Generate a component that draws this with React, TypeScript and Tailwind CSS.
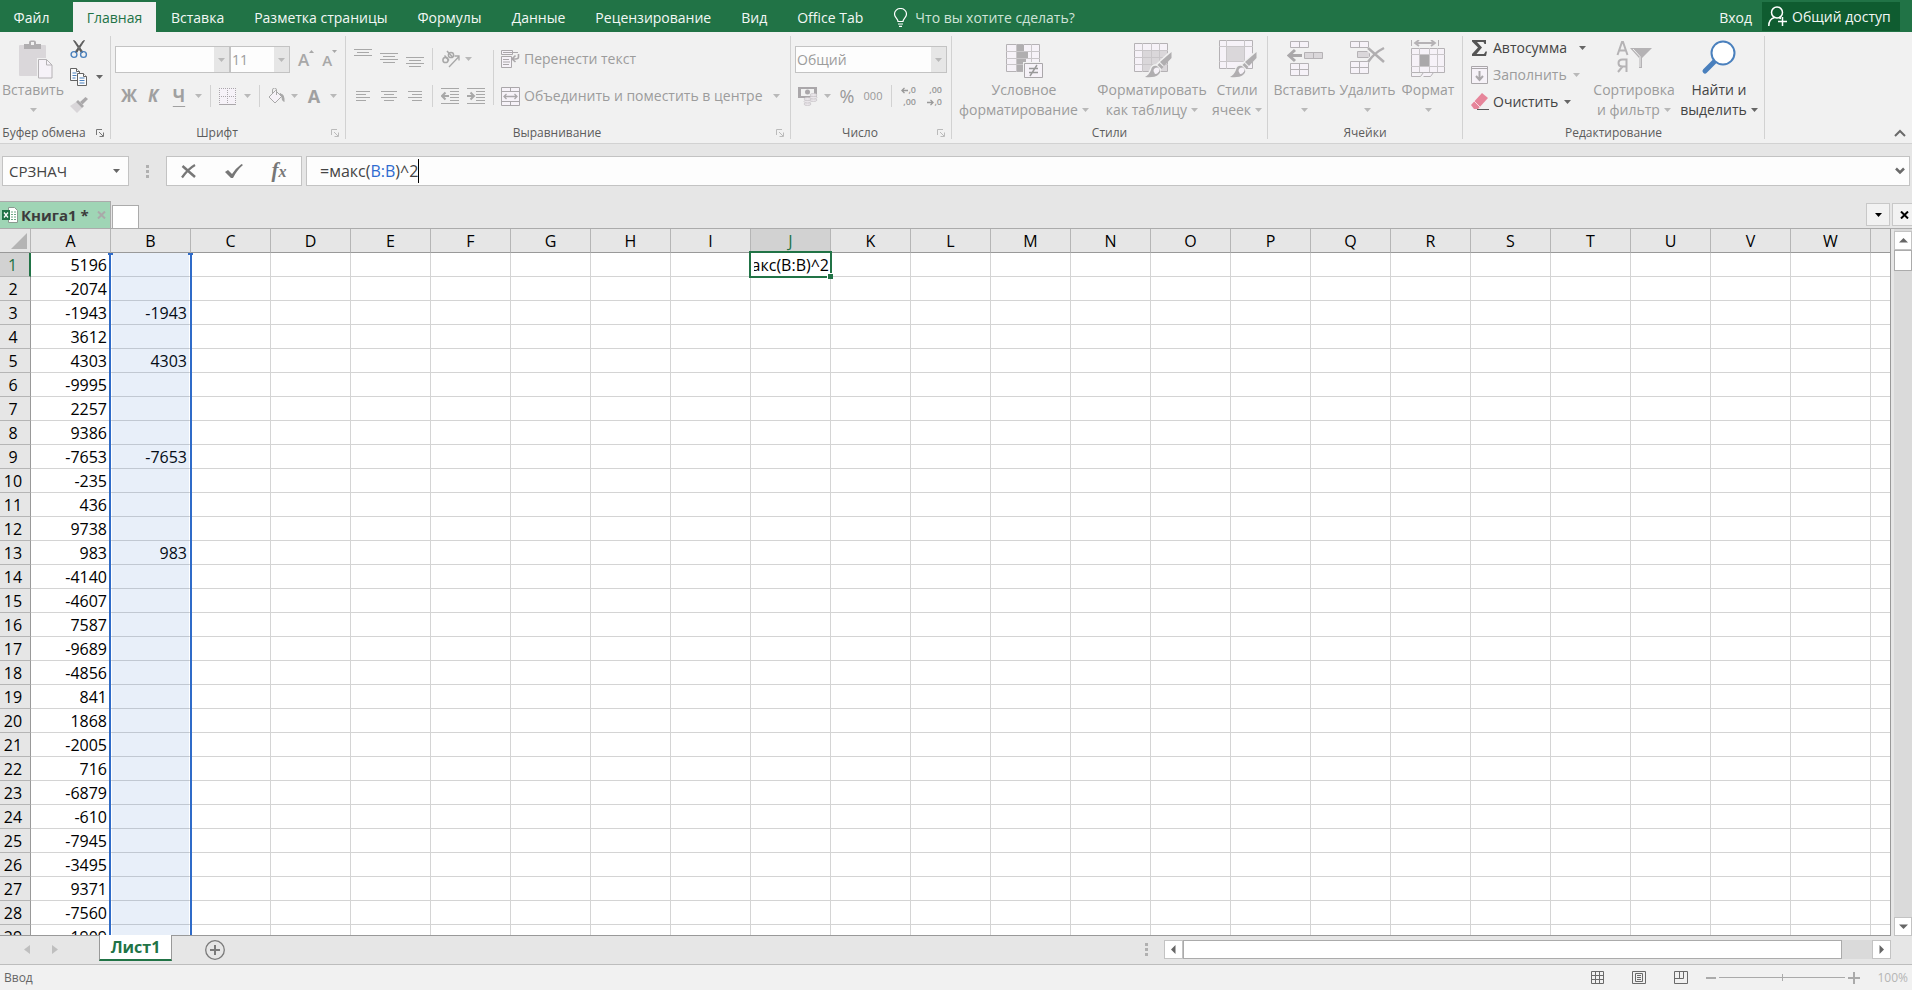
import { useState } from 'react';
import type { ReactNode } from 'react';
import clsx from 'clsx';

const tabs = ['Вставка', 'Разметка страницы', 'Формулы', 'Данные', 'Рецензирование', 'Вид', 'Office Tab'];

const columns = 'ABCDEFGHIJKLMNOPQRSTUVWX'.split('');

const columnA = [
  5196, -2074, -1943, 3612, 4303, -9995, 2257, 9386, -7653, -235, 436, 9738, 983, -4140, -4607,
  7587, -9689, -4856, 841, 1868, -2005, 716, -6879, -610, -7945, -3495, 9371, -7560, -1909,
];

const columnB: Record<number, number> = { 3: -1943, 5: 4303, 9: -7653, 13: 983 };

function Caret({ active = false, className }: { active?: boolean; className?: string }) {
  return (
    <svg width="7" height="4" viewBox="0 0 7 4" className={clsx('shrink-0', active ? 'fill-[#666]' : 'fill-[#b9b9b9]', className)}>
      <path d="M0 0h7L3.500 4z" />
    </svg>
  );
}

/* ---------- Ribbon icons ---------- */

function PasteIcon() {
  return (
    <svg width="36" height="40" viewBox="0 0 36 40" className="ml-1.5">
      <rect x="1" y="5" width="27" height="31" rx="1" fill="#dad7da" />
      <path d="M6 4h5V2.500a2 2 0 0 1 2-2h3a2 2 0 0 1 2 2V4h5v5H6z" fill="#b0aeb0" />
      <rect x="13" y="2" width="3" height="3" fill="#f1f1f1" />
      <path d="M19 18h10l6 6v15H19z" fill="#f1f1f1" />
      <path d="M20.500 19.500h8l5.500 5.500v13H20.500z" fill="#f6f2f8" stroke="#b5b2b5" />
      <path d="M28.500 19.500V25H34" fill="none" stroke="#b5b2b5" />
    </svg>
  );
}

function CutIcon() {
  return (
    <svg width="18" height="19" viewBox="0 0 18 19" fill="none">
      <path d="M3.500 0.500 5 1l8 11-1.500 1zM14.500 0.500 13 1 5 12l1.500 1z" fill="#595959" stroke="#595959" strokeWidth="0.800" />
      <circle cx="4" cy="14.500" r="2.900" stroke="#4a80bd" strokeWidth="1.400" />
      <circle cx="13.500" cy="14.500" r="2.900" stroke="#4a80bd" strokeWidth="1.400" />
    </svg>
  );
}

function CopyIcon() {
  return (
    <svg width="18" height="19" viewBox="0 0 18 19" fill="#fcfcfc" stroke="#636363">
      <path d="M.5.5h6l3 3v9h-9z" />
      <path d="M6.500.5v3h3" />
      <path d="M2.500 5h4M2.500 7.500h4M2.500 10h3" stroke="#4a80bd" />
      <path d="M7.500 5.500h6l3 3v9h-9z" />
      <path d="M13.500 5.500v3h3" />
      <path d="M9.500 10h5M9.500 12.500h5M9.500 15h5" stroke="#4a80bd" />
    </svg>
  );
}

function BrushIcon() {
  return (
    <svg width="18" height="16" viewBox="0 0 18 16">
      <path d="M0 9 6 5l6 6-5 5z" fill="#d9d6d9" />
      <path d="m6 5 2-2 6 6-2 2z" fill="#aaa8aa" />
      <path d="m10 5 5.500-5L18 2l-5.500 5.500z" fill="#aaa8aa" />
    </svg>
  );
}

function AlignIcon({ lines }: { lines: [number, number][] }) {
  return (
    <svg width="18" height="12" viewBox="0 0 18 12" stroke="#a8a8a8">
      {lines.map(([x, w], i) => (
        <path key={i} d={`M${x} ${i * 3 + 1.5}h${w}`} />
      ))}
    </svg>
  );
}

function OrientationIcon() {
  return (
    <svg width="20" height="18" viewBox="0 0 20 18" fill="none" stroke="#a8a8a8" strokeWidth="1.500">
      <ellipse cx="4.500" cy="10" rx="2.600" ry="2.600" />
      <path d="m3.500 5.500 4.500 5" />
      <ellipse cx="10" cy="5" rx="2.600" ry="2.600" />
      <path d="m6 1 5.500 6" />
      <path d="M8 17 18 6.500M13.500 6H18v4.500" strokeWidth="1.300" />
    </svg>
  );
}

function IndentIcon({ increase = false }: { increase?: boolean }) {
  return (
    <svg width="18" height="17" viewBox="0 0 18 17" fill="none" stroke="#a8a8a8">
      <path d="M0 .5h18M9 3.500h9M9 6.500h9M9 9.500h9M9 12.500h9M0 15.500h18" />
      <path d={increase ? 'M0 8h6M3.500 4.500 7 8l-3.500 3.500' : 'M8 8H2M4.500 4.500 1 8l3.500 3.500'} strokeWidth="2" />
    </svg>
  );
}

function WrapIcon() {
  return (
    <svg width="19" height="18" viewBox="0 0 19 18" fill="#f6f2f8" stroke="#aaa7aa">
      <path d="M.5.5h11v4H.5z" />
      <path d="M2 2.500h15M.5 6.500h10v11H.5zM2 9.500h6M2 12h7M2 14.500h6" />
      <path d="M17.500 4v3q0 2-3 2h-3M14.500 5.500 11 9l3.500 3" fill="none" strokeWidth="1.600" />
    </svg>
  );
}

function MergeIcon() {
  return (
    <svg width="19" height="19" viewBox="0 0 19 19" fill="#f6f2f8" stroke="#aaa7aa">
      <path d="M.5.5h18v18H.5zM.5 4.500h18M.5 14.500h18M9.500.5v4M9.500 14.500v4" />
      <path d="M3 9.500h13M5.500 7 3 9.500 5.500 12M13.500 7 16 9.500 13.500 12" strokeWidth="1.300" />
    </svg>
  );
}

function BordersIcon() {
  return (
    <svg width="17" height="17" viewBox="0 0 17 17" stroke="#aaa7aa">
      <path d="M0 0h17v17H0z" fill="#f6f2f8" stroke="none" />
      <path d="M0 .5h17M0 8.500h17M.5 0v16M8.500 0v16M16.500 0v16" strokeDasharray="1 1" />
      <path d="M0 16.500h17" />
    </svg>
  );
}

function BucketIcon() {
  return (
    <svg width="17" height="17" viewBox="0 0 17 17" fill="none" stroke="#a8a8a8">
      <path d="M1 9 7.500 2.500l6 6L7 15z" fill="#f6f2f8" />
      <path d="M4.500 6V2a2 2 0 0 1 4 0v5" />
      <path d="M12 5.500q4 1 4 5v3q-2-1-2-4z" fill="#a8a8a8" />
    </svg>
  );
}

function MoneyIcon() {
  return (
    <svg width="20" height="20" viewBox="0 0 20 20">
      <path d="M0 1h19v11H0z" fill="#aaa7aa" />
      <path d="M3 3h13v7H3z" fill="#f1f1f1" />
      <path d="M0 1h5L0 6zM19 1h-5l5 5z" fill="#aaa7aa" />
      <circle cx="9.500" cy="6" r="2.500" fill="#aaa7aa" />
      <g fill="#eae6ea" stroke="#c9c5c9" strokeWidth="0.800">
        <ellipse cx="15.500" cy="14" rx="3.500" ry="1.500" />
        <ellipse cx="15.500" cy="11.500" rx="3.500" ry="1.500" />
        <ellipse cx="15.500" cy="9" rx="3.500" ry="1.500" />
        <ellipse cx="9.500" cy="18" rx="3.500" ry="1.500" />
        <ellipse cx="9.500" cy="15.500" rx="3.500" ry="1.500" />
        <ellipse cx="9.500" cy="13" rx="3.500" ry="1.500" />
      </g>
    </svg>
  );
}

function SmallArrow({ right = false }: { right?: boolean }) {
  return (
    <svg width="7" height="7" viewBox="0 0 8 7" fill="none" stroke="#999" strokeWidth="1.600" className="shrink-0">
      <path d={right ? 'M0 3.500h7M4 .5l3 3-3 3' : 'M8 3.500H1M4 .5l-3 3 3 3'} />
    </svg>
  );
}

function ConditionalIcon() {
  return (
    <svg width="38" height="38" viewBox="0 0 38 38">
      <path d="M1.500 4.500h33v27h-33z" fill="#f6f2f8" stroke="#b5b2b5" />
      <path d="M1 11.500h34M1 18.500h34M1 24.500h34M11.500 4v28M18.500 4v28M26.500 4v28" stroke="#c9c6c9" />
      <path d="M12 5h7v6h-7zM12 12h11v6H12zM12 19h9v5h-9zM12 25h6v6h-6z" fill="#b0aeb0" />
      <path d="M18 22h20v16H18z" fill="#f1f1f1" />
      <path d="M19.500 23.500h18v14h-18z" fill="#f6f2f8" stroke="#aaa7aa" />
      <path d="M24 28.500h9M24 32.500h9M32 25l-7 11" fill="none" stroke="#999" strokeWidth="1.400" />
    </svg>
  );
}

function PaintBrush() {
  return (
    <g>
      <path d="m39 9-16 15q-5 0-6 5-2 5-7 8 9 2 14-1 5-3 4-8l11-11z" fill="#f1f1f1" />
      <path d="M38.500 12v6L31 26l-4-4z" fill="#b0aeb0" />
      <path d="m26.500 23 4 4-2 2-4-4z" fill="#b0aeb0" />
      <path d="M24 26q-5-1-6 4-2 5-6 7 9 1 13-2 5-4-1-9z" fill="#b0aeb0" />
      <path d="M20.500 31q0-3.500 4-3.500 3 1 1.500 4-2 3-4 2.500z" fill="#f6f2f8" />
    </g>
  );
}

function TableFormatIcon() {
  return (
    <svg width="39" height="38" viewBox="0 0 39 38">
      <path d="M1.500 3.500h33v28h-33z" fill="#f6f2f8" stroke="#b5b2b5" />
      <path d="M10 11h24v20H10z" fill="#dad7da" />
      <path d="M1 10.500h34M1 17.500h34M1 24.500h34M9.500 3v29M18.500 3v29M26.500 3v29" stroke="#c9c6c9" />
      <PaintBrush />
    </svg>
  );
}

function CellStylesIcon() {
  return (
    <svg width="39" height="38" viewBox="0 0 39 38">
      <path d="M1.500.5h33v28h-33z" fill="#f6f2f8" stroke="#b5b2b5" />
      <path d="M9 7h17v14H9z" fill="#dad7da" />
      <path d="M1 6.500h34M1 21.500h34M8.500 0v29M26.500 0v29" stroke="#c9c6c9" />
      <PaintBrush />
    </svg>
  );
}

function InsertCellsIcon() {
  return (
    <svg width="36" height="38" viewBox="0 0 36 38" fill="#f6f2f8" stroke="#b5b2b5">
      <path d="M3.500 1.500h18v6h-18zM12.500 1.500v6M3.500 23.500h18v12h-18zM3.500 29.500h18M12.500 23.500v12" />
      <path d="M17.500 12.500h18v6h-18zM26.500 12.500v6" fill="#dad7da" />
      <path d="M15 15.500H3M8 10l-6 5.500L8 21" fill="none" stroke="#aaa8aa" strokeWidth="3" />
    </svg>
  );
}

function DeleteCellsIcon() {
  return (
    <svg width="36" height="38" viewBox="0 0 36 38" fill="#f6f2f8" stroke="#b5b2b5">
      <path d="M.5 1.500h18v6H.5zM9.500 1.500v6M.5 21.500h18v12H.5zM.5 27.500h18M9.500 21.500v12" />
      <path d="M7.500 11.500h12v6h-12z" fill="#dad7da" />
      <path d="m18 8 16 14M34 8 18 22" stroke="#f1f1f1" strokeWidth="6" />
      <path d="m18 8 16 14M34 8Q24 13 18 22" fill="none" stroke="#b0aeb0" strokeWidth="2.500" />
    </svg>
  );
}

function FormatCellsIcon() {
  return (
    <svg width="36" height="38" viewBox="0 0 36 38" fill="#f6f2f8" stroke="#b5b2b5">
      <path d="M1.500 0v6M28.500 0v6" />
      <path d="M5 3h20M9 0 5 3l4 3M21 0l4 3-4 3" fill="none" strokeWidth="1.800" />
      <path d="M1.500 8.500h33v24h-33z" />
      <path d="M1 14.500h34M1 26.500h34M9.500 8v24M19.500 8v24M27.500 8v24" stroke="#c9c6c9" />
      <path d="M10 15h9v11h-9z" fill="#aaa8aa" stroke="none" />
      <path d="M1.500 33v3.500h9l3-4h10l-3 4h-7" />
    </svg>
  );
}

function FillIcon() {
  return (
    <svg width="17" height="18" viewBox="0 0 17 18" fill="none" stroke="#aaa7aa">
      <path d="M.5.5h16v17H.5zM.5 2.500h16" fill="#f6f2f8" />
      <path d="M8.500 5v8M5 10l3.500 4 3.500-4" strokeWidth="2" />
    </svg>
  );
}

function EraserIcon() {
  return (
    <svg width="19" height="18" viewBox="0 0 19 18">
      <path d="m11 0 6 5-10 11-4 0-3-4z" fill="#e6859a" />
      <path d="m3 8 6 6" stroke="#f7dbe1" />
      <path d="M6 16.500h12" stroke="#595959" />
    </svg>
  );
}

function SortFilterIcon() {
  return (
    <svg width="37" height="34" viewBox="0 0 37 34" fill="none" stroke="#b5b3b5" strokeWidth="2">
      <path d="m1.500 15 4.500-13h1l4.500 13M3 10.500h7" />
      <path d="M10.500 32V19.500h-4q-4 0-4 3.500t4 3.500h4M6.500 26.500 2 32" />
      <path d="M14 8h22L26 18v10h-3V18z" fill="#b5b3b5" stroke="none" />
      <path d="m17 9 7 7.500V27" stroke="#f1f1f1" strokeWidth="1" />
    </svg>
  );
}

function FindIcon() {
  return (
    <svg width="36" height="36" viewBox="0 0 36 36" fill="none" stroke="#4a80bd">
      <path d="m13 22-9 9" strokeWidth="5" strokeLinecap="round" />
      <circle cx="22" cy="13" r="11.500" fill="#fff" strokeWidth="2" />
    </svg>
  );
}

/* ---------- Ribbon building blocks ---------- */

interface GroupProps {
  title: string;
  className: string;
  launcher?: 'on' | 'off';
  children: ReactNode;
}

function Group({ title, className, launcher, children }: GroupProps) {
  return (
    <section className={clsx('flex h-[103px] shrink-0 flex-col border-r border-[#d2d2d2]', className)} aria-label={title}>
      <div className="flex flex-1">{children}</div>
      <div className="flex h-3 items-center text-[12px] leading-3 text-[#5c5c5c]">
        <span className="flex-1 text-center whitespace-nowrap">{title}</span>
        {launcher && (
          <button type="button" aria-label={`${title}: параметры`} className="mr-1.5 ml-2">
            <svg width="8" height="8" viewBox="0 0 8 8" fill="none" className={launcher === 'on' ? 'stroke-[#777]' : 'stroke-[#bbb]'}>
              <path d="M.5 6V.5H6M3 3l4 4M7.500 3.500v4h-4" />
            </svg>
          </button>
        )}
      </div>
    </section>
  );
}

interface BigButtonProps {
  icon: ReactNode;
  lines: string[];
  className?: string;
  active?: boolean;
}

function BigButton({ icon, lines, className, active = false }: BigButtonProps) {
  return (
    <button
      type="button"
      className={clsx('flex shrink-0 flex-col items-center text-[14px] leading-5 whitespace-nowrap', active ? 'text-[#444]' : 'text-[#9c9c9c]', className)}
    >
      <span className="flex h-11 items-start pt-1">{icon}</span>
      <span>{lines[0]}</span>
      <span className="flex h-5 items-center gap-1">
        {lines[1]}
        <Caret active={active} />
      </span>
    </button>
  );
}

function IconButton({ label, className, children }: { label: string; className?: string; children: ReactNode }) {
  return (
    <button type="button" aria-label={label} className={clsx('flex shrink-0 items-center justify-center', className)}>
      {children}
    </button>
  );
}

function Combo({ label, value, className }: { label: string; value: string; className: string }) {
  return (
    <label className={clsx('relative flex h-[27px] shrink-0 border border-[#c3c3c3] bg-[#fdfdfd]', className)}>
      <select aria-label={label} defaultValue={value} className="w-full appearance-none bg-transparent pl-px text-[14px] leading-6 text-[#9c9c9c] outline-none">
        <option value={value}>{value}</option>
      </select>
      <span className="pointer-events-none absolute inset-y-0 right-0 flex w-[15px] items-center justify-center bg-[#e6e6e6]">
        <Caret />
      </span>
    </label>
  );
}

function Separator({ className }: { className: string }) {
  return <span className={clsx('w-px shrink-0 bg-[#d2d2d2]', className)} />;
}

function Ribbon() {
  return (
    <div className="flex h-[112px] shrink-0 items-start border-b border-[#d2d2d2] bg-[#f1f1f1] pt-1">
      <Group title="Буфер обмена" launcher="on" className="w-[111px]">
        <BigButton icon={<PasteIcon />} lines={['Вставить']} className="w-[66px]" />
        <div className="flex flex-col gap-2.5 pt-1 pl-1">
          <IconButton label="Вырезать" className="h-[18px] w-[18px]"><CutIcon /></IconButton>
          <div className="flex items-center gap-2">
            <IconButton label="Копировать" className="h-[18px] w-[18px]"><CopyIcon /></IconButton>
            <IconButton label="Варианты копирования" className="h-4"><Caret active /></IconButton>
          </div>
          <IconButton label="Формат по образцу" className="h-[18px] w-[18px]"><BrushIcon /></IconButton>
        </div>
      </Group>

      <Group title="Шрифт" launcher="off" className="w-[235px]">
        <div className="flex flex-col gap-3 pt-2.5 pl-1">
          <div className="flex items-center">
            <Combo label="Шрифт" value="" className="w-[115px]" />
            <Combo label="Размер шрифта" value="11" className="w-[60px]" />
            <button type="button" className="ml-2 flex items-start text-[17px] leading-5 font-semibold text-[#a8a8a8]">
              A
              <svg width="5" height="3" viewBox="0 0 5 3" fill="#a8a8a8"><path d="M0 3h5L2.500 0z" /></svg>
            </button>
            <button type="button" className="ml-2 flex items-start text-[15px] leading-5 font-semibold text-[#a8a8a8]">
              A
              <svg width="5" height="3" viewBox="0 0 5 3" fill="#a8a8a8"><path d="M0 0h5L2.500 3z" /></svg>
            </button>
          </div>
          <div className="flex h-[22px] items-center pl-1 text-[17px] leading-5 text-[#a0a0a0]">
            <button type="button" className="w-5 font-bold">Ж</button>
            <button type="button" className="ml-1.5 w-4 font-bold italic">К</button>
            <button type="button" className="ml-2.5 w-4 font-bold underline underline-offset-4">Ч</button>
            <Caret className="ml-2" />
            <Separator className="ml-2 h-[22px]" />
            <IconButton label="Границы" className="ml-2"><BordersIcon /></IconButton>
            <Caret className="ml-2" />
            <Separator className="ml-2 h-[22px]" />
            <IconButton label="Цвет заливки" className="ml-2"><BucketIcon /></IconButton>
            <Caret className="ml-1.5" />
            <button type="button" className="ml-2 w-4 text-[18px] font-bold">A</button>
            <Caret className="ml-2" />
          </div>
        </div>
      </Group>

      <Group title="Выравнивание" launcher="off" className="w-[445px]">
        <div className="flex w-[147px] shrink-0 flex-col gap-[15px] pt-3 pl-2">
          <div className="flex h-[22px]">
            <IconButton label="По верхнему краю" className="h-3 w-[18px]"><AlignIcon lines={[[0, 18], [3, 12], [0, 18]]} /></IconButton>
            <IconButton label="По середине" className="ml-2 h-5 w-[18px]"><AlignIcon lines={[[0, 18], [3, 12], [0, 18], [3, 12]]} /></IconButton>
            <IconButton label="По нижнему краю" className="ml-2 h-7 w-[18px]"><AlignIcon lines={[[0, 18], [3, 12], [0, 18], [3, 12]]} /></IconButton>
            <Separator className="ml-2 h-[22px]" />
            <IconButton label="Ориентация" className="ml-2"><OrientationIcon /></IconButton>
            <Caret className="ml-1 self-center" />
          </div>
          <div className="flex h-[22px] items-center">
            <IconButton label="По левому краю" className="w-[18px]"><AlignIcon lines={[[2, 14], [2, 10], [2, 14], [2, 10]]} /></IconButton>
            <IconButton label="По центру" className="ml-2 w-[18px]"><AlignIcon lines={[[1, 16], [4, 10], [1, 16], [4, 10]]} /></IconButton>
            <IconButton label="По правому краю" className="ml-2 w-[18px]"><AlignIcon lines={[[2, 14], [6, 10], [2, 14], [6, 10]]} /></IconButton>
            <Separator className="ml-2 h-[22px]" />
            <IconButton label="Уменьшить отступ" className="ml-2"><IndentIcon /></IconButton>
            <IconButton label="Увеличить отступ" className="ml-2"><IndentIcon increase /></IconButton>
          </div>
        </div>
        <Separator className="mt-3.5 h-[55px]" />
        <div className="flex flex-col gap-[15px] pt-3 pl-[7px] text-[14px] leading-[22px] text-[#9c9c9c]">
          <button type="button" className="flex items-center gap-1 whitespace-nowrap"><WrapIcon />Перенести текст</button>
          <div className="flex items-center">
            <button type="button" className="flex items-center gap-1 whitespace-nowrap"><MergeIcon />Объединить и поместить в центре</button>
            <Caret className="ml-2.5" />
          </div>
        </div>
      </Group>

      <Group title="Число" launcher="off" className="w-[161px]">
        <div className="flex flex-col gap-3 pt-2.5 pl-1">
          <Combo label="Числовой формат" value="Общий" className="w-[152px]" />
          <div className="flex h-[22px] items-center pl-[3px] text-[#999]">
            <IconButton label="Финансовый формат"><MoneyIcon /></IconButton>
            <Caret className="ml-1.5" />
            <button type="button" className="ml-2 w-4 text-[18px] leading-5">%</button>
            <button type="button" className="ml-2 w-5 text-[11px] leading-5">000</button>
            <Separator className="ml-2 h-[22px]" />
            <button type="button" aria-label="Увеличить разрядность" className="ml-2 flex w-4 flex-col text-[9px] leading-3 font-semibold">
              <span className="flex items-center justify-end"><SmallArrow />,0</span>
              <span className="text-right">,00</span>
            </button>
            <button type="button" aria-label="Уменьшить разрядность" className="ml-2.5 flex w-4 flex-col text-[9px] leading-3 font-semibold">
              <span className="text-right">,00</span>
              <span className="flex items-center justify-end"><SmallArrow right />,0</span>
            </button>
          </div>
        </div>
      </Group>

      <Group title="Стили" className="w-[316px]">
        <BigButton icon={<ConditionalIcon />} lines={['Условное', 'форматирование']} className="w-[144px]" />
        <BigButton icon={<TableFormatIcon />} lines={['Форматировать', 'как таблицу']} className="w-[112px]" />
        <BigButton icon={<CellStylesIcon />} lines={['Стили', 'ячеек']} className="w-[58px]" />
      </Group>

      <Group title="Ячейки" className="w-[195px]">
        <BigButton icon={<InsertCellsIcon />} lines={['Вставить']} className="ml-1 w-[65px]" />
        <BigButton icon={<DeleteCellsIcon />} lines={['Удалить']} className="w-[61px]" />
        <BigButton icon={<FormatCellsIcon />} lines={['Формат']} className="w-[60px]" />
      </Group>

      <Group title="Редактирование" className="w-[302px]">
        <div className="flex w-[126px] shrink-0 flex-col gap-[5px] pt-px pl-2 text-[14px] leading-[22px] whitespace-nowrap text-[#9c9c9c]">
          <div className="flex items-center">
            <button type="button" className="flex items-center gap-1 text-[#444]">
              <svg width="18" height="18" viewBox="0 0 18 18" fill="#555">
                <path d="M1 1h14v4h-1.500L12.500 3H6l5 5.500L5.500 15H13l1.500-2.500H16L15 17H1v-2l6-6.500L1 2.500z" />
              </svg>
              Автосумма
            </button>
            <Caret active className="ml-3" />
          </div>
          <div className="flex items-center">
            <button type="button" className="flex items-center gap-[5px]"><FillIcon />Заполнить</button>
            <Caret className="ml-1.5" />
          </div>
          <div className="flex items-center">
            <button type="button" className="flex items-center gap-[3px] text-[#444]"><EraserIcon />Очистить</button>
            <Caret active className="ml-1.5" />
          </div>
        </div>
        <BigButton icon={<SortFilterIcon />} lines={['Сортировка', 'и фильтр']} className="w-[90px]" />
        <BigButton active icon={<FindIcon />} lines={['Найти и', 'выделить']} className="w-[80px]" />
      </Group>

      <button type="button" aria-label="Свернуть ленту" className="mr-1.5 mb-1.5 ml-auto self-end">
        <svg width="12" height="8" viewBox="0 0 12 8" fill="none" stroke="#6a6a6a" strokeWidth="2">
          <path d="m1 7 5-5 5 5" />
        </svg>
      </button>
    </div>
  );
}

function TitleTabs() {
  return (
    <nav className="flex h-8 shrink-0 items-end bg-[#217346] text-[14px] text-[#f3f8f5]">
      <button type="button" className="h-[30px] w-[73px] pr-2.5">Файл</button>
      <button type="button" className="h-[30px] w-[83px] bg-[#f1f1f1] text-[#217346]">Главная</button>
      {tabs.map((tab) => (
        <button key={tab} type="button" className="h-[30px] shrink-0 px-[15px] whitespace-nowrap">
          {tab}
        </button>
      ))}
      <button type="button" className="ml-4 flex h-[30px] items-center gap-2 whitespace-nowrap text-[#cfe3d8]">
        <svg width="13" height="19" viewBox="0 0 13 19" fill="none" stroke="#fff">
          <path d="M4 13.500c0-3-3.500-4-3.500-7.500a6 5.500 0 0 1 12 0c0 3.500-3.500 4.500-3.500 7.500zM4 16h5M5 18.300h3" strokeWidth="1.200" />
        </svg>
        Что вы хотите сделать?
      </button>
      <button type="button" className="mr-2.5 ml-auto h-[30px]">Вход</button>
      <button type="button" className="mr-3 mb-px flex h-[29px] w-[138px] items-center gap-1 bg-[#0f5c30] pl-1.5 whitespace-nowrap">
        <svg width="20" height="21" viewBox="0 0 20 21" fill="none" stroke="#fff" strokeWidth="1.500">
          <circle cx="9" cy="6.500" r="5.500" />
          <path d="M.8 20q0-7 5.700-8.500M11 11.500l2 1M14.500 11v9M10 15.500h9" />
        </svg>
        Общий доступ
      </button>
    </nav>
  );
}

function FormulaBar({ formula, onChange }: { formula: string; onChange: (value: string) => void }) {
  const parts = formula.split(/([A-Z]+:[A-Z]+)/);

  return (
    <div className="flex h-[42px] shrink-0 items-end pr-0.5 pl-0.5 text-[15px] text-[#444]">
      <div className="flex h-[30px] w-[127px] items-center border border-[#c3c3c3] bg-[#fdfdfd]">
        <input aria-label="Имя" defaultValue="СРЗНАЧ" className="w-[105px] bg-transparent pl-1.5 outline-none" />
        <IconButton label="Список имён" className="w-4"><Caret active /></IconButton>
      </div>
      <svg width="3" height="13" viewBox="0 0 3 13" fill="#b0b0b0" className="mb-2 ml-[17px]">
        <path d="M0 0h3v3H0zM0 5h3v3H0zM0 10h3v3H0z" />
      </svg>
      <div className="ml-[17px] flex h-[30px] w-[136px] items-center border border-[#c3c3c3] bg-[#fdfdfd]">
        <IconButton label="Отмена" className="w-11">
          <svg width="16" height="15" viewBox="0 0 16 15" fill="none" stroke="#777">
            <path d="m1.500 2 12.500 11" strokeWidth="2.500" />
            <path d="M14 1Q7 5 1 13.500" strokeWidth="2.200" />
          </svg>
        </IconButton>
        <IconButton label="Ввод" className="w-[46px]">
          <svg width="18" height="14" viewBox="0 0 18 14" fill="#777">
            <path d="m0 8 3-2 4 4Q11 4 16.500 0L18 1Q12 6 8 14H6z" />
          </svg>
        </IconButton>
        <button type="button" aria-label="Вставить функцию" className="w-11 font-['Liberation_Serif',serif] text-[21px] leading-7 font-bold text-[#777] italic">
          f<span className="text-[16px]">x</span>
        </button>
      </div>
      <div className="relative ml-1 flex h-[30px] flex-1 items-center border border-[#c3c3c3] bg-[#fdfdfd] pl-[13px] text-[16px]">
        <span aria-hidden className="pointer-events-none whitespace-pre">
          {parts.map((part, i) => (
            <span key={i} className={i % 2 ? 'text-[#2f6bd0]' : undefined}>{part}</span>
          ))}
        </span>
        <span className="h-6 w-px bg-black" />
        <input
          aria-label="Строка формул"
          value={formula}
          onChange={(e) => onChange(e.target.value)}
          className="absolute inset-y-0 left-[13px] w-4/5 bg-transparent text-transparent outline-none"
        />
        <IconButton label="Развернуть строку формул" className="mr-1 ml-auto">
          <svg width="10" height="8" viewBox="0 0 10 8" fill="none" stroke="#6a6a6a" strokeWidth="2.500">
            <path d="m1 1.500 4 4 4-4" />
          </svg>
        </IconButton>
      </div>
    </div>
  );
}

function BookTabs() {
  return (
    <div className="flex h-[43px] shrink-0 items-end border-b border-[#ababab]">
      <div className="flex h-[27px] w-[111px] items-center border-t border-r border-[#ababab] bg-[#9fd5b5] pl-0.5">
        <svg width="16" height="16" viewBox="0 0 16 16">
          <path d="M6.500.5h6l3 3v12h-9z" fill="#fff" stroke="#8a9a90" />
          <path d="M9 5h2M12 5h2M9 7.500h2M12 7.500h2M9 10h2M12 10h2M9 12.500h2M12 12.500h2" stroke="#6aa583" />
          <path d="M0 3h8v10H0z" fill="#217346" />
          <path d="m2 5.500 4 5M6 5.500l-4 5" stroke="#fff" strokeWidth="1.300" />
        </svg>
        <button type="button" className="ml-[3px] text-[15px] leading-6 font-bold whitespace-nowrap text-[#3c3c3c]">Книга1 *</button>
        <IconButton label="Закрыть книгу" className="mr-1 ml-auto">
          <svg width="9" height="8" viewBox="0 0 9 8" stroke="#a9a9a9" strokeWidth="2"><path d="m1 .5 7 7M8 .5l-7 7" /></svg>
        </IconButton>
      </div>
      <button type="button" aria-label="Новая книга" className="ml-px h-[23px] w-[27px] border border-b-0 border-[#ababab] bg-white" />
      <IconButton label="Список книг" className="mb-0.5 ml-auto h-[23px] w-6 border border-[#c8c8c8] bg-[#f2f2f2]">
        <svg width="7" height="4" viewBox="0 0 7 4"><path d="M0 0h7L3.500 4z" /></svg>
      </IconButton>
      <IconButton label="Закрыть" className="mb-0.5 ml-0.5 h-[23px] w-5 border border-r-0 border-[#c8c8c8] bg-[#f2f2f2] pl-1">
        <svg width="9" height="8" viewBox="0 0 9 8" stroke="#000" strokeWidth="2"><path d="m1 .5 7 7M8 .5l-7 7" /></svg>
      </IconButton>
    </div>
  );
}

function Grid({ formula }: { formula: string }) {
  return (
    <div className="relative min-w-0 flex-1 overflow-hidden border-r border-b border-[#999] bg-white">
      <table className="w-[1951px] table-fixed border-separate border-spacing-0 text-[16px] leading-[22px] text-black">
        <colgroup>
          <col className="w-[31px]" />
          {columns.map((c) => <col key={c} className="w-20" />)}
        </colgroup>
        <thead>
          <tr className="h-6">
            <th className="border-r border-b border-[#b5b5b5] border-b-[#999] bg-[#e6e6e6] p-0">
              <svg width="16" height="16" viewBox="0 0 16 16" fill="#b4b4b4" className="ml-[11px]"><path d="M16 0v16H0z" /></svg>
            </th>
            {columns.map((c) => (
              <th
                key={c}
                scope="col"
                className={clsx(
                  'border-r border-b border-[#b5b5b5] border-b-[#999] p-0 pt-px font-normal',
                  c === 'J' ? 'bg-[#d2d2d2] text-[#217346]' : 'bg-[#e6e6e6]',
                )}
              >
                {c}
              </th>
            ))}
          </tr>
        </thead>
        <tbody>
          {columnA.map((value, i) => (
            <tr key={i} className="h-6">
              <th
                scope="row"
                className={clsx(
                  'border-b border-[#b5b5b5] p-0 pt-px pr-1 font-normal',
                  i === 0 ? 'border-r-2 border-r-[#217346] bg-[#d2d2d2] text-[#217346]' : 'border-r border-r-[#999] bg-[#e6e6e6]',
                )}
              >
                {i + 1}
              </th>
              {columns.map((c) => (
                <td key={c} className="border-r border-b border-[#d4d4d4] p-0 pt-px pr-[3px] text-right">
                  {c === 'A' ? value : c === 'B' ? columnB[i + 1] : null}
                </td>
              ))}
            </tr>
          ))}
        </tbody>
      </table>

      {/* Referenced range B:B */}
      <div className="pointer-events-none absolute top-6 bottom-0 left-[109px] w-[83px] border-x-2 border-[#2f6bc8] px-px">
        <div className="h-full bg-[#2f6bc8]/11" />
        <span className="absolute top-0 -left-[3px] h-0.5 w-[5px] bg-[#2f6bc8]" />
        <span className="absolute top-0 -right-[3px] h-0.5 w-[5px] bg-[#2f6bc8]" />
      </div>

      {/* Cell being edited */}
      <div className="absolute top-[22px] left-[749px] flex h-[27px] w-[83px] justify-end border-2 border-[#217346] bg-white pr-px pl-[3px]">
        <div className="flex flex-1 justify-end overflow-hidden text-[16px] leading-6 whitespace-nowrap">{formula}</div>
        <span className="absolute -right-[3px] -bottom-[3px] h-1.5 w-1.5 border-t border-l border-white bg-[#217346]" />
      </div>
    </div>
  );
}

function ScrollButton({ label, d, className }: { label: string; d: string; className: string }) {
  return (
    <IconButton label={label} className={clsx('border border-[#c3c3c3] bg-white', className)}>
      <svg width="9" height="9" viewBox="0 0 9 9" fill="#666"><path d={d} /></svg>
    </IconButton>
  );
}

function SheetBar() {
  return (
    <div className="flex h-[29px] shrink-0 border-b border-[#bdbdbd]">
      <div className="flex w-[99px] items-center gap-[22px] pb-0.5 pl-6">
        <IconButton label="Предыдущий лист">
          <svg width="6" height="9" viewBox="0 0 6 9" fill="#bfbfbf"><path d="M6 0v9L0 4.500z" /></svg>
        </IconButton>
        <IconButton label="Следующий лист">
          <svg width="6" height="9" viewBox="0 0 6 9" fill="#bfbfbf"><path d="M0 0v9l6-4.500z" /></svg>
        </IconButton>
      </div>
      <button type="button" className="relative -mt-px h-[26px] w-[73px] border-x border-b-2 border-[#999] border-b-[#217346] bg-white text-[16px] leading-[22px] font-bold text-[#217346]">
        Лист1
      </button>
      <IconButton label="Новый лист" className="ml-[33px]">
        <svg width="20" height="20" viewBox="0 0 20 20" fill="none" stroke="#7a7a7a">
          <circle cx="10" cy="10" r="9.300" strokeWidth="1.300" />
          <path d="M5 10h10M10 5v10" strokeWidth="2" />
        </svg>
      </IconButton>
      <svg width="3" height="13" viewBox="0 0 3 13" fill="#b0b0b0" className="mt-[7px] mr-4 ml-auto">
        <path d="M0 0h3v3H0zM0 5h3v3H0zM0 10h3v3H0z" />
      </svg>
      <div className="mt-1 mr-[21px] flex h-[19px] w-[38%] bg-[#dadada]">
        <ScrollButton label="Влево" d="M6.500 0v9L2 4.500z" className="w-[19px]" />
        <div className="mr-[30px] flex-1 border border-[#ababab] bg-white" />
        <ScrollButton label="Вправо" d="M2.500 0v9L7 4.500z" className="w-[19px]" />
      </div>
    </div>
  );
}

function StatusBar() {
  return (
    <footer className="flex h-[25px] shrink-0 items-center bg-[#f1f1f1] pr-1 pl-1 text-[12px] text-[#666]">
      <span>Ввод</span>
      <div className="ml-auto flex items-center gap-7">
        <IconButton label="Обычный">
          <svg width="13" height="13" viewBox="0 0 13 13" fill="none" stroke="#6a6a6a"><path d="M.5.5h12v12H.5zM.5 4.500h12M.5 8.500h12M4.500.5v12M8.500.5v12" /></svg>
        </IconButton>
        <IconButton label="Разметка страницы">
          <svg width="14" height="13" viewBox="0 0 14 13" fill="none" stroke="#6a6a6a"><path d="M.5.5h13v12H.5zM3.500 2.500h7v8h-7zM5 4.500h4M5 6.500h4M5 8.500h4" /></svg>
        </IconButton>
        <IconButton label="Страничный режим">
          <svg width="14" height="13" viewBox="0 0 14 13" fill="none" stroke="#6a6a6a"><path d="M.5.5h13v12H.5zM5.500.5v7M9.500.5v7h-9" /></svg>
        </IconButton>
      </div>
      <IconButton label="Уменьшить" className="ml-[18px]">
        <svg width="10" height="2" viewBox="0 0 10 2" fill="#aaa"><path d="M0 0h10v2H0z" /></svg>
      </IconButton>
      <input
        type="range"
        aria-label="Масштаб"
        min={10}
        max={190}
        defaultValue={100}
        className="mx-[3px] h-3 w-[126px] appearance-none bg-transparent [&::-webkit-slider-runnable-track]:h-px [&::-webkit-slider-runnable-track]:bg-[#aaa] [&::-webkit-slider-thumb]:-mt-[3px] [&::-webkit-slider-thumb]:h-[7px] [&::-webkit-slider-thumb]:w-px [&::-webkit-slider-thumb]:appearance-none [&::-webkit-slider-thumb]:bg-[#aaa]"
      />
      <IconButton label="Увеличить">
        <svg width="12" height="12" viewBox="0 0 12 12" stroke="#aaa" strokeWidth="2"><path d="M0 6h12M6 0v12" /></svg>
      </IconButton>
      <span className="w-12 text-right text-[#b5b5b5]">100%</span>
    </footer>
  );
}

export default function App() {
  const [formula, setFormula] = useState('=макс(B:B)^2');

  return (
    <div className="flex h-screen flex-col overflow-hidden bg-[#e6e6e6] font-['Open_Sans','Noto_Sans',sans-serif]">
      <TitleTabs />
      <Ribbon />
      <FormulaBar formula={formula} onChange={setFormula} />
      <BookTabs />
      <main className="flex min-h-0 flex-1">
        <Grid formula={formula} />
        <div className="ml-[3px] flex w-[18px] shrink-0 flex-col bg-[#dadada] pt-0.5">
          <ScrollButton label="Вверх" d="M0 6.500h9L4.500 2z" className="h-[19px]" />
          <div className="h-[21px] border border-[#ababab] bg-white" />
          <ScrollButton label="Вниз" d="M0 2.500h9L4.500 7z" className="mt-auto h-[19px]" />
        </div>
      </main>
      <SheetBar />
      <StatusBar />
    </div>
  );
}
